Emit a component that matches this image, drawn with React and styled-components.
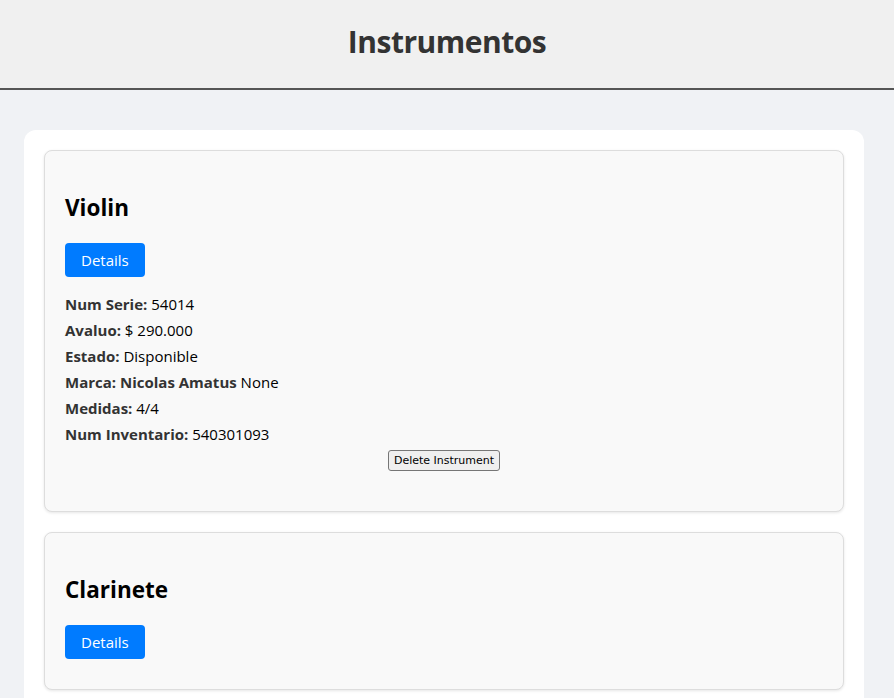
import React from 'react';
import styled, { createGlobalStyle } from 'styled-components';

const GlobalStyle = createGlobalStyle`
  body {
    margin: 0;
    background: #f0f2f5;
    font-family: "Open Sans", "Noto Sans", sans-serif;
  }
`;

const Header = styled.header`
  background: #f0f0f0;
  height: 90px;
  padding-bottom: 6px;
  box-sizing: border-box;
  border-bottom: 2px solid #555;
  display: flex;
  align-items: center;
  justify-content: center;
`;

const Title = styled.h1`
  margin: 0;
  font-size: 30px;
  font-weight: 700;
  color: #333;
  letter-spacing: -0.5px;
`;

const Container = styled.main`
  margin: 40px 30px 0 24px;
  background: #fff;
  border-radius: 12px;
  padding: 20px;
  display: flex;
  flex-direction: column;
  gap: 20px;
`;

const Card = styled.div`
  background: #f9f9f9;
  border: 1px solid #ddd;
  border-radius: 8px;
  padding: 20px;
  box-shadow: 0 1px 3px rgba(0, 0, 0, 0.1);
`;

const Name = styled.h2`
  margin: 21px 0 19px;
  font-size: 22.5px;
  font-weight: 700;
  color: #000;
  line-height: 32px;
`;

const DetailsButton = styled.button`
  background: #007bff;
  color: #fff;
  border: none;
  border-radius: 4px;
  height: 34px;
  padding: 0 16px;
  font-family: inherit;
  font-size: 15px;
  margin-bottom: 10px;
  cursor: pointer;
`;

const Info = styled.div`
  margin-top: 4px;
  font-size: 15px;
  color: #000;
`;

const Line = styled.div`
  line-height: 26px;
`;

const Label = styled.b`
  color: #333;
`;

const DeleteRow = styled.div`
  display: flex;
  justify-content: center;
  margin-top: 3px;
  margin-bottom: 20px;
`;

const DeleteButton = styled.button`
  font-family: "DejaVu Sans", sans-serif;
  font-size: 11px;
  padding: 1px 5px;
  height: 21px;
  background: #efefef;
  border: 1px solid #767676;
  border-radius: 3px;
  color: #000;
`;

const instruments = [
  {
    name: 'Violin',
    expanded: true,
    numSerie: '54014',
    avaluo: '$ 290.000',
    estado: 'Disponible',
    marca: 'Nicolas Amatus',
    modelo: 'None',
    medidas: '4/4',
    inventario: '540301093',
  },
  { name: 'Clarinete', expanded: false },
];

const InstrumentCard = ({ item }) => (
  <Card>
    <Name>{item.name}</Name>
    <DetailsButton>Details</DetailsButton>
    {item.expanded && (
      <>
        <Info>
          <Line><Label>Num Serie:</Label> {item.numSerie}</Line>
          <Line><Label>Avaluo:</Label> {item.avaluo}</Line>
          <Line><Label>Estado:</Label> {item.estado}</Line>
          <Line><Label>Marca: {item.marca}</Label> {item.modelo}</Line>
          <Line><Label>Medidas:</Label> {item.medidas}</Line>
          <Line><Label>Num Inventario:</Label> {item.inventario}</Line>
        </Info>
        <DeleteRow>
          <DeleteButton>Delete Instrument</DeleteButton>
        </DeleteRow>
      </>
    )}
  </Card>
);

export default function App() {
  return (
    <>
      <GlobalStyle />
      <Header>
        <Title>Instrumentos</Title>
      </Header>
      <Container>
        {instruments.map((item) => (
          <InstrumentCard key={item.name} item={item} />
        ))}
      </Container>
    </>
  );
}
